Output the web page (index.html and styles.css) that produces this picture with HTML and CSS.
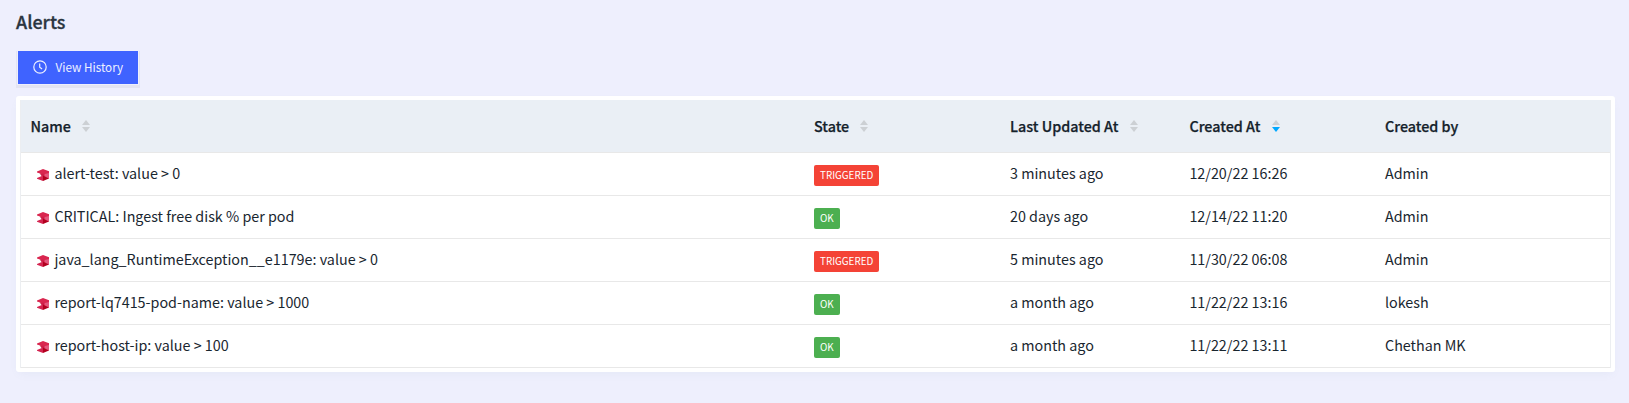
FILE: index.html
```
<!DOCTYPE html>
<html lang="en">
<head>
<meta charset="utf-8">
<title>Alerts</title>
<link rel="stylesheet" href="styles.css">
</head>
<body>
<svg width="0" height="0" class="defs" aria-hidden="true">
  <symbol id="cube" viewBox="0 0 12 12">
    <path fill="#e4587e" d="M6 4.6 12 2.2V9.8L6 7.6z"/>
    <path fill="#d9264f" d="M0 2.4 6 0 12 2.2V4L6 5.6 0 3.4z"/>
    <path fill="#cf1f48" d="M2.6 4.2 7.5 5V7L4.5 7z"/>
    <path fill="#d42450" d="M0 9 6 6.4V12L0 9.8z"/>
    <path fill="#b3001f" d="M6 6.6 12 9.4 6 12z"/>
  </symbol>
  <symbol id="sort" viewBox="0 0 8 12">
    <path class="up" d="M4 0 8 5H0z"/>
    <path class="down" d="M0 7H8L4 12z"/>
  </symbol>
</svg>
<h1 class="title">Alerts</h1>
<button class="history">
  <svg class="clock" viewBox="0 0 14 14"><circle cx="7" cy="7" r="6.2"/><path d="M6.7 3.4V7.3L9.1 9"/></svg>
  <span>View History</span>
</button>
<section class="card">
  <div class="table">
    <div class="row head">
      <div class="cell">Name<svg class="sort"><use href="#sort"/></svg></div>
      <div class="cell">State<svg class="sort"><use href="#sort"/></svg></div>
      <div class="cell">Last Updated At<svg class="sort"><use href="#sort"/></svg></div>
      <div class="cell">Created At<svg class="sort desc"><use href="#sort"/></svg></div>
      <div class="cell">Created by</div>
    </div>
    <div class="row">
      <div class="cell name"><svg class="cube"><use href="#cube"/></svg>alert-test: value &gt; 0</div>
      <div class="cell"><span class="tag triggered">TRIGGERED</span></div>
      <div class="cell">3 minutes ago</div>
      <div class="cell">12/20/22 16:26</div>
      <div class="cell">Admin</div>
    </div>
    <div class="row">
      <div class="cell name"><svg class="cube"><use href="#cube"/></svg>CRITICAL: Ingest free disk % per pod</div>
      <div class="cell"><span class="tag ok">OK</span></div>
      <div class="cell">20 days ago</div>
      <div class="cell">12/14/22 11:20</div>
      <div class="cell">Admin</div>
    </div>
    <div class="row">
      <div class="cell name"><svg class="cube"><use href="#cube"/></svg>java_lang_RuntimeException__e1179e: value &gt; 0</div>
      <div class="cell"><span class="tag triggered">TRIGGERED</span></div>
      <div class="cell">5 minutes ago</div>
      <div class="cell">11/30/22 06:08</div>
      <div class="cell">Admin</div>
    </div>
    <div class="row">
      <div class="cell name"><svg class="cube"><use href="#cube"/></svg>report-lq7415-pod-name: value &gt; 1000</div>
      <div class="cell"><span class="tag ok">OK</span></div>
      <div class="cell">a month ago</div>
      <div class="cell">11/22/22 13:16</div>
      <div class="cell">lokesh</div>
    </div>
    <div class="row">
      <div class="cell name"><svg class="cube"><use href="#cube"/></svg>report-host-ip: value &gt; 100</div>
      <div class="cell"><span class="tag ok">OK</span></div>
      <div class="cell">a month ago</div>
      <div class="cell">11/22/22 13:11</div>
      <div class="cell">Chethan MK</div>
    </div>
  </div>
</section>
</body>
</html>
```
FILE: styles.css
```
* { box-sizing: border-box; }
body {
  margin: 0;
  padding: 9px 14px 0 16px;
  height: 403px;
  overflow: hidden;
  background: #eeeffd;
  color: #19262f;
  font: 14.33px/20px "Noto Sans CJK SC", "Noto Sans", sans-serif;
}
.defs { position: absolute; }
.title {
  margin: 0 0 15px;
  font-size: 17.9px;
  line-height: 25px;
  font-weight: 500;
  color: #2a3540;
  -webkit-text-stroke: .3px #2a3540;
}
.history {
  display: flex;
  align-items: center;
  gap: 9px;
  width: 124px;
  height: 37px;
  margin: 0 0 10px;
  padding: 0 0 1px 14.5px;
  border: 2px solid transparent;
  border-radius: 0;
  background: #3f63ff;
  background-clip: padding-box;
  box-shadow: 0 2px 0 rgba(0, 0, 0, .043);
  color: #eef1ff;
  font: 11.7px/20px "Noto Sans CJK SC", "Noto Sans", sans-serif;
  white-space: nowrap;
}
.clock { width: 14px; height: 14px; flex: none; fill: none; stroke: #eef1ff; stroke-width: 1.2; }
.card {
  height: 276px;
  padding: 4px;
  border-radius: 3px;
  background: #fff;
  box-shadow: 0 4px 9px -3px rgba(102, 136, 153, .08);
}
.table { border: 1px solid #eceef1; border-width: 0 1px; }
.row {
  display: grid;
  grid-template-columns: 783px 196px 179.4px 195.6px 1fr;
  height: 43px;
  align-items: center;
  padding-bottom: 2px;
  border-bottom: 1px solid #e8e8e8;
}
.head {
  height: 53px;
  padding-bottom: 0;
  background: #eaeff5;
  font-weight: 500;
  color: #15222b;
  -webkit-text-stroke: .25px #15222b;
}
.cell { display: flex; align-items: center; padding-left: 10px; white-space: nowrap; }
.cell:first-child { padding-left: 9.4px; }
.cell.name { padding-left: 16px; }
.cube { width: 12px; height: 12px; margin: 4px 5.4px 0 0; }
.sort { width: 8px; height: 12px; margin-left: 11.3px; -webkit-text-stroke: 0; --up: #ccd0d4; --down: #ccd0d4; }
.desc { --down: #00a8ff; }
.up { fill: var(--up); }
.down { fill: var(--down); }
.tag {
  height: 21px;
  margin-top: 5px;
  padding: 0 6px;
  border-radius: 2px;
  color: #fff;
  font-size: 9.85px;
  line-height: 20px;
}
.triggered { background: #f44336; }
.ok { background: #4caf50; }
```
